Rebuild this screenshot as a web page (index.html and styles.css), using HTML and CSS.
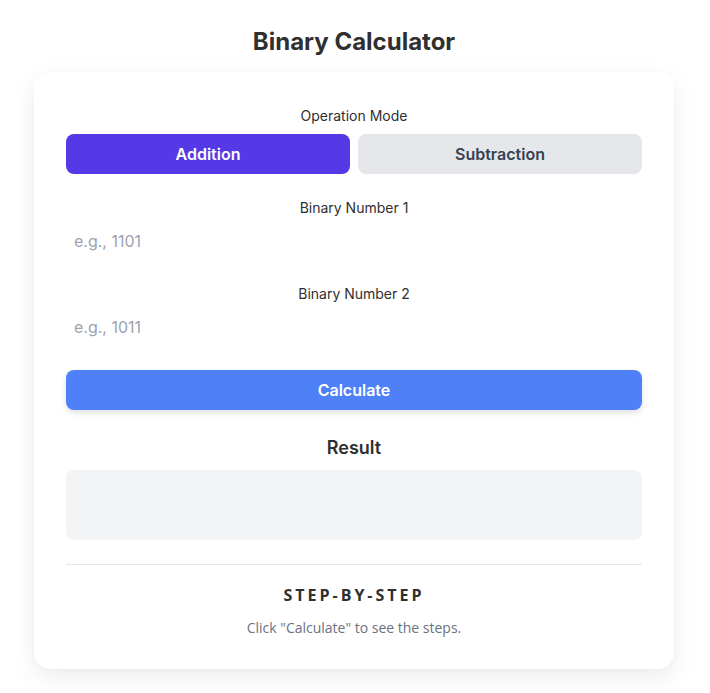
FILE: index.html
```html
<!DOCTYPE html>
<html>
  <head>
    <meta http-equiv="Content-Type" content="text/html;charset=utf-8" />
    <title>Binary Calculator</title>
    <link rel="stylesheet" href="styles.css">
  </head>

  <body>
    <div class="page">
      <h1 class="title">Binary Calculator</h1>

      <div class="card">
        <!-- Mode switch -->
        <div class="mode-group">
          <label class="field-label">Operation Mode</label>
          <div class="mode-buttons">
            <button class="mode-btn active" id="addBtn">Addition</button>
            <button class="mode-btn" id="subBtn">Subtraction</button>
          </div>
        </div>

        <div class="field-group">
          <label class="field-label" for="num1">Binary Number 1</label>
          <input type="text" id="num1" class="binary-input" placeholder="e.g., 1101" />
        </div>

        <div class="field-group">
          <label class="field-label" for="num2">Binary Number 2</label>
          <input type="text" id="num2" class="binary-input" placeholder="e.g., 1011" />
        </div>

        <button class="calc-btn" id="calculate">Calculate</button>

        <h2 class="result-title">Result</h2>
        <div class="result-box" id="result"></div>

        <div class="steps">
          <h3 class="steps-title">STEP-BY-STEP</h3>
          <p class="steps-text">Click "Calculate" to see the steps.</p>
        </div>
      </div>
    </div>
  </body>
</html>
```

FILE: styles.css
```css
body {
  background-color: #ffffff;
  color: #333333;
  font-family: Inter, "Noto Sans", sans-serif;
  margin: 0;
  padding: 0;
}

.page {
  width: 640px;
  margin: 0 auto;
  padding: 24px 0 20px;
  transform: translateX(-1px);
}

.title {
  margin: 0 0 12px;
  font-size: 24px;
  line-height: 36px;
  font-weight: 700;
  text-align: center;
  color: #2f2f2f;
}

.card {
  background-color: #ffffff;
  border-radius: 16px;
  padding: 34px 32px 31px;
  box-shadow: 0 8px 24px rgba(0, 0, 0, 0.08), 0 1px 4px rgba(0, 0, 0, 0.02);
}

.field-label {
  display: block;
  font-size: 14px;
  line-height: 20px;
  font-weight: 400;
  text-align: center;
  color: #2f2f2f;
  margin-bottom: 6px;
}

.mode-group {
  margin-bottom: 24px;
}

.mode-group .field-label {
  margin-bottom: 8px;
}

.mode-buttons {
  display: flex;
  gap: 8px;
}

.mode-btn {
  flex: 1;
  height: 40px;
  border: none;
  border-radius: 8px;
  background-color: #e5e7eb;
  color: #374151;
  font-family: Inter, sans-serif;
  font-size: 16px;
  font-weight: 600;
  cursor: pointer;
}

.mode-btn.active {
  background-color: #5639e6;
  color: #ffffff;
}

.field-group {
  margin-bottom: 26px;
}

.binary-input {
  display: block;
  box-sizing: border-box;
  width: 100%;
  height: 34px;
  padding: 0 8px;
  border: none;
  outline: none;
  background: transparent;
  font-family: Inter, sans-serif;
  font-size: 16px;
  color: #333333;
}

.binary-input::placeholder {
  color: #9ca3af;
}

.calc-btn {
  display: block;
  width: 100%;
  height: 40px;
  border: none;
  border-radius: 8px;
  background-color: #4f80f8;
  color: #ffffff;
  font-family: Inter, sans-serif;
  font-size: 16px;
  font-weight: 600;
  box-shadow: 0 3px 6px rgba(0, 0, 0, 0.12);
  cursor: pointer;
}

.result-title {
  margin: 24px 0 8px;
  font-size: 18px;
  line-height: 28px;
  font-weight: 600;
  text-align: center;
  color: #2f2f2f;
}

.result-box {
  height: 70px;
  border-radius: 8px;
  background-color: #f3f4f6;
}

.steps {
  margin-top: 24px;
  border-top: 1px solid #e5e7eb;
  padding-top: 18px;
  text-align: center;
}

.steps-title {
  margin: 0 0 11px;
  font-family: "Open Sans", sans-serif;
  font-size: 16px;
  line-height: 24px;
  font-weight: 700;
  letter-spacing: 3px;
  color: #2f2f2f;
}

.steps-text {
  margin: 0;
  font-family: "Open Sans", sans-serif;
  font-size: 14px;
  line-height: 20px;
  color: #6b7280;
}
```
